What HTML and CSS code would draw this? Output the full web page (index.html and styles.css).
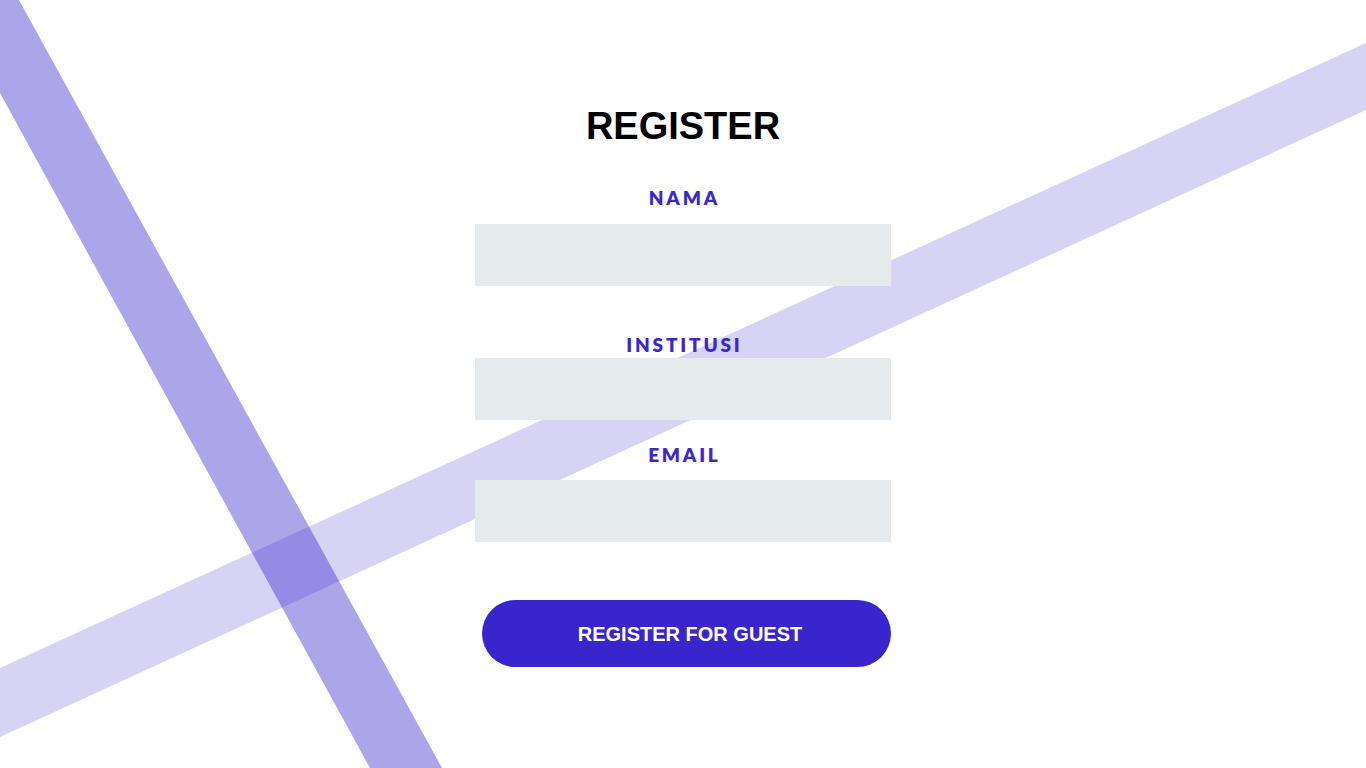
FILE: index.html
```html
<!DOCTYPE html>
<html lang="id">
<head>
<meta charset="utf-8">
<title>Register</title>
<link rel="stylesheet" href="styles.css">
</head>
<body>
<div class="page">
  <svg class="bands" viewBox="0 0 1366 768" preserveAspectRatio="none" aria-hidden="true">
    <polygon class="band band-light" points="0,668 1366,43 1366,110 0,737"/>
    <polygon class="band band-dark" points="-51,0 19,0 442,768 370,768"/>
  </svg>
  <main class="form-wrap">
    <h1 class="title">REGISTER</h1>
    <form class="form">
      <label class="label label-nama" for="nama">NAMA</label>
      <input class="field field-nama" id="nama" type="text">
      <label class="label label-institusi" for="institusi">INSTITUSI</label>
      <input class="field field-institusi" id="institusi" type="text">
      <label class="label label-email" for="email">EMAIL</label>
      <input class="field field-email" id="email" type="email">
      <button class="btn" type="button">REGISTER FOR GUEST</button>
    </form>
  </main>
</div>
</body>
</html>
```

FILE: styles.css
```css
html, body {
  margin: 0;
  padding: 0;
  background: #ffffff;
}

.page {
  position: relative;
  width: 100%;
  height: 768px;
  overflow: hidden;
}

.bands {
  position: absolute;
  left: 0;
  top: 0;
  width: 100%;
  height: 100%;
  z-index: 0;
}

.band {
  fill: #3925cc;
}

.band-dark {
  fill-opacity: 0.41;
}

.band-light {
  fill-opacity: 0.2;
}

.form-wrap {
  position: relative;
  z-index: 1;
  display: flex;
  flex-direction: column;
  align-items: center;
  padding-top: 107px;
}

.title {
  margin: 0;
  font-family: "Liberation Sans", Arial, sans-serif;
  font-weight: 700;
  font-size: 38px;
  line-height: 38px;
  color: #000000;
}

.form {
  display: flex;
  flex-direction: column;
  align-items: center;
  width: 416px;
}

.label {
  display: block;
  font-family: Lato, "Open Sans", sans-serif;
  font-weight: 800;
  font-size: 19px;
  line-height: 20px;
  letter-spacing: 2.8px;
  color: #3a28cf;
  padding-left: 2.8px;
}

.label-nama { margin-top: 43px; }
.label-institusi { margin-top: 49px; }
.label-email { margin-top: 25px; }

.field {
  display: block;
  box-sizing: border-box;
  width: 416px;
  height: 62px;
  border: none;
  outline: none;
  background: #e5eaed;
  margin: 0;
  padding: 0 16px;
}

.field-nama { margin-top: 16px; }
.field-institusi { margin-top: 3px; }
.field-email { margin-top: 15px; }

.btn {
  box-sizing: border-box;
  align-self: flex-end;
  width: 409px;
  height: 67px;
  margin-top: 58px;
  border: none;
  border-radius: 34px;
  background: #3925cc;
  color: #ffffff;
  font-family: "Liberation Sans", Arial, sans-serif;
  font-weight: 700;
  font-size: 20px;
  padding: 2px 0 0 7px;
  cursor: pointer;
}
```
